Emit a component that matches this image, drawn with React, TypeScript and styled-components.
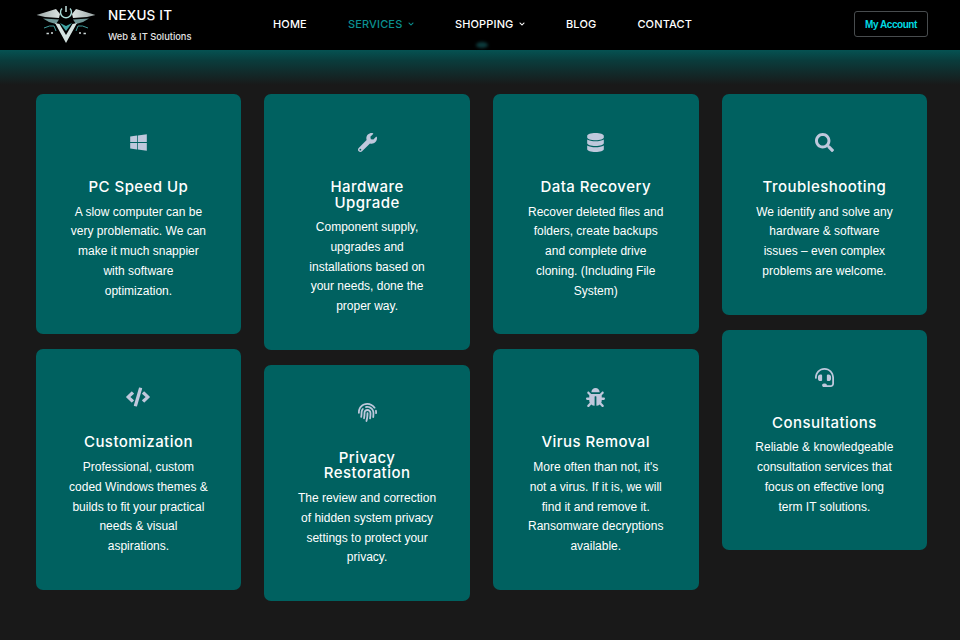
import React from "react";
import styled, { createGlobalStyle } from "styled-components";
import { FaWindows, FaWrench, FaDatabase, FaSearch, FaCode, FaFingerprint, FaBug, FaHeadset, FaChevronDown } from "react-icons/fa";

const Global = createGlobalStyle`
  html, body { margin: 0; padding: 0; background: #191919; }
  body { font-family: "Liberation Sans", Arial, sans-serif; overflow: hidden; }
  * { box-sizing: border-box; }
`;
const Page = styled.div`
  width: 960px; height: 640px; overflow: hidden; background: #191919;
`;
const Header = styled.header`
  position: relative;
  height: 50px; background: #000;
  display: flex; align-items: center;
  padding: 0 32px 2px 36px;
`;
const Brand = styled.div`
  width: 237px; display: flex; align-items: center; gap: 12px; flex: none;
`;
const BrandText = styled.div`
  display: flex; flex-direction: column; gap: 8px; color: #fff;
  font-family: Inter, sans-serif;
`;
const BrandName = styled.div`
  font-size: 13.5px; line-height: 16px; font-weight: 500; letter-spacing: .2px;
`;
const BrandTag = styled.div`
  font-size: 9.3px; line-height: 11px; color: #e4e4e4; font-weight: 500;
`;
const Nav = styled.nav`
  flex: 1; display: flex; align-items: center; gap: 41px;
`;
const NavItem = styled.a<{ $active?: boolean }>`
  display: flex; align-items: center; gap: 5.5px;
  font-family: Inter, sans-serif; font-size: 11px; font-weight: 500;
  letter-spacing: .15px; color: ${p => (p.$active ? "#0b9090" : "#fff")};
  white-space: nowrap;
`;
const Account = styled.a`
  width: 74px; height: 26px; border: 1px solid #484c4e; border-radius: 3px;
  display: flex; align-items: center; justify-content: center;
  color: #00dbe3; font-size: 10px; font-weight: 700; letter-spacing: -.45px; flex: none;
`;
const Smudge = styled.span`
  position: absolute; left: 476px; top: 42px; width: 12px; height: 6px;
  border-radius: 50%; background: #0c3a3c; filter: blur(1.5px);
`;
const Glow = styled.div`
  height: 35px; background: linear-gradient(180deg, #055252 0%, #0a3c3c 30%, #191919 100%);
`;
const Grid = styled.main`
  display: grid; grid-template-columns: repeat(4, 205.67px); column-gap: 23px;
  padding: 9px 0 0 35.6px;
`;
const Col = styled.div`
  display: flex; flex-direction: column; gap: 15px;
`;
const Card = styled.article`
  background: #006160; border-radius: 7px; padding: 37px 33.2px 33px;
  display: flex; flex-direction: column; align-items: center; text-align: center;
  color: #fff;
`;
const IconBox = styled.div`
  height: 22px; display: flex; align-items: center; justify-content: center;
  color: #bfc8dc; font-size: 19px; margin-bottom: 26px;
`;
const Title = styled.h3`
  margin: 0 0 8px; font-family: Inter, sans-serif; font-weight: 500;
  font-size: 15px; line-height: 15.5px; letter-spacing: .45px; color: #fff;
`;
const Body = styled.p`
  margin: 0; font-size: 12px; line-height: 19.8px; color: #fff;
`;

const Logo = () => (
  <svg width="60" height="41" viewBox="35 3 60 41" style={{ flex: "none" }}>
    <defs>
      <linearGradient id="w" x1="0" x2="1" y1="0" y2="0">
        <stop offset="0" stopColor="#9aa6a6" />
        <stop offset=".5" stopColor="#eef4f2" />
        <stop offset="1" stopColor="#9aa6a6" />
      </linearGradient>
    </defs>
    <path d="M35.5 14 L55 8 L59 13 L58 17 L44 16 Z M94.5 14 L75 8 L71 13 L72 17 L86 16 Z" fill="url(#w)" />
    <path d="M42 17.5 L58 18.5 L55 23 L48 21 Z M88 17.5 L72 18.5 L75 23 L82 21 Z" fill="#6f9696" />
    <path d="M61 7.5 a5.5 5.5 0 1 0 8 0" fill="none" stroke="#a8dcd8" strokeWidth="1.4" />
    <path d="M65 5 V11" stroke="#d0f0ec" strokeWidth="1.4" />
    <path d="M54 22 L65 42 L76 22 L71.5 23 L65 34 L58.5 23 Z" fill="#d4e2e0" />
    <path d="M59 22 L65 30 L71 22 L65 25 Z" fill="#3fa4a4" />
    <path d="M43 27 q6 -3 10 -2 l2 5 M87 27 q-6 -3 -10 -2 l-2 5" fill="none" stroke="#3f9c9c" strokeWidth="1" />
    <path d="M45.5 32.5 h2.4 M50 32 h2 M78 32 h2 M82.5 32.5 h2.4" stroke="#cfdada" strokeWidth="1.5" />
  </svg>
);

const columns = [
  [
    { i: <FaWindows />, t: "PC Speed Up", b: "A slow computer can be very problematic. We can make it much snappier with software optimization." },
    { i: <FaCode size={24} />, t: "Customization", b: "Professional, custom coded Windows themes & builds to fit your practical needs & visual aspirations." },
  ],
  [
    { i: <FaWrench />, t: "Hardware Upgrade", b: "Component supply, upgrades and installations based on your needs, done the proper way." },
    { i: <FaFingerprint />, t: "Privacy Restoration", b: "The review and correction of hidden system privacy settings to protect your privacy." },
  ],
  [
    { i: <FaDatabase />, t: "Data Recovery", b: "Recover deleted files and folders, create backups and complete drive cloning. (Including File System)" },
    { i: <FaBug />, t: "Virus Removal", b: "More often than not, it's not a virus. If it is, we will find it and remove it. Ransomware decryptions available." },
  ],
  [
    { i: <FaSearch />, t: "Troubleshooting", b: "We identify and solve any hardware & software issues – even complex problems are welcome." },
    { i: <FaHeadset />, t: "Consultations", b: "Reliable & knowledgeable consultation services that focus on effective long term IT solutions." },
  ],
];

export default function App() {
  return (
    <Page>
      <Global />
      <Header>
        <Brand>
          <Logo />
          <BrandText>
            <BrandName>NEXUS IT</BrandName>
            <BrandTag>Web &amp; IT Solutions</BrandTag>
          </BrandText>
        </Brand>
        <Nav>
          <NavItem>HOME</NavItem>
          <NavItem $active>SERVICES <FaChevronDown size={6} /></NavItem>
          <NavItem>SHOPPING <FaChevronDown size={6} /></NavItem>
          <NavItem>BLOG</NavItem>
          <NavItem>CONTACT</NavItem>
        </Nav>
        <Account>My Account</Account>
        <Smudge />
      </Header>
      <Glow />
      <Grid>
        {columns.map((col, c) => (
          <Col key={c}>
            {col.map(card => (
              <Card key={card.t}>
                <IconBox>{card.i}</IconBox>
                <Title>{card.t}</Title>
                <Body>{card.b}</Body>
              </Card>
            ))}
          </Col>
        ))}
      </Grid>
    </Page>
  );
}
